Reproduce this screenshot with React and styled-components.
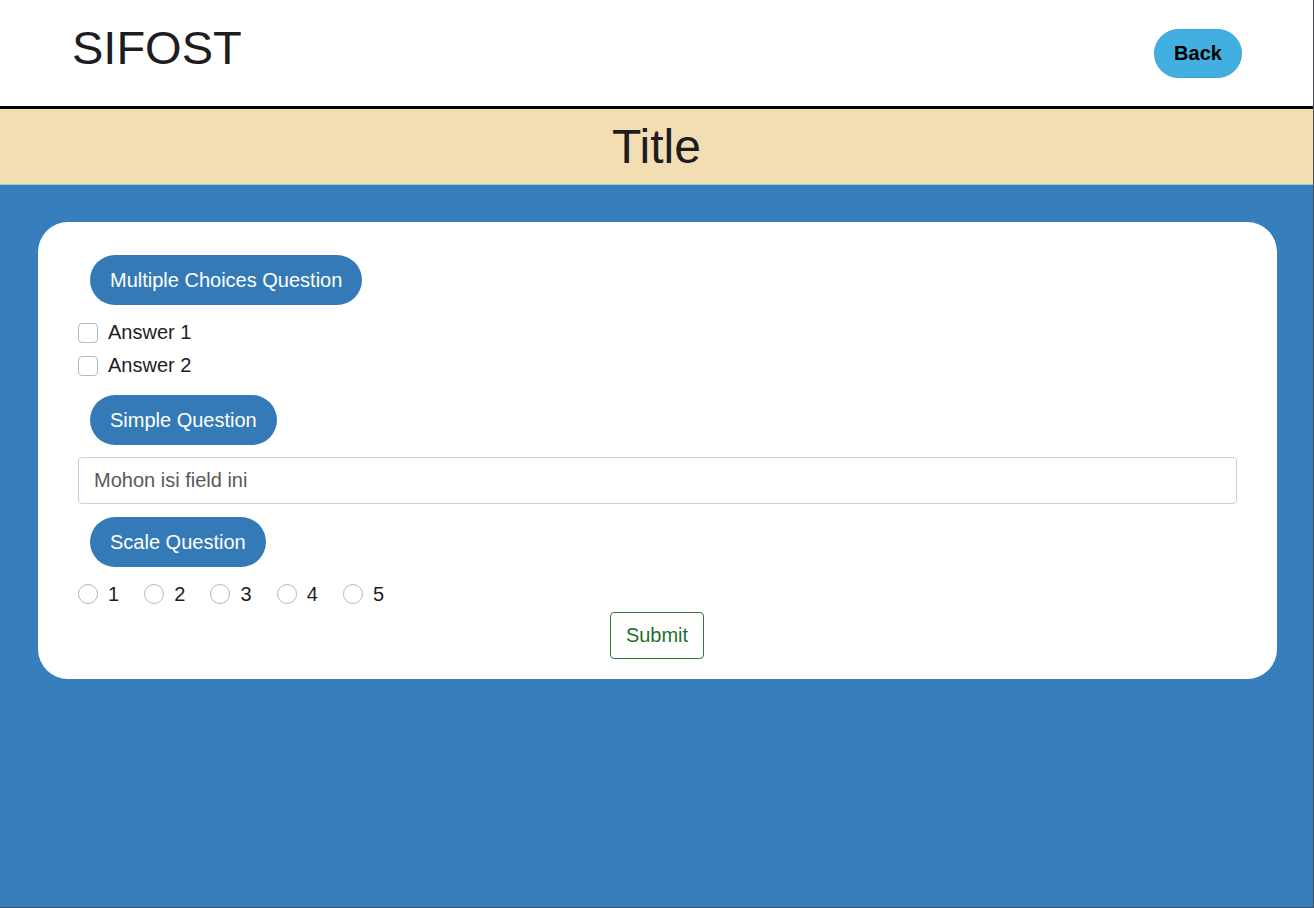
import React from "react"
import styled, { createGlobalStyle } from "styled-components"

const GlobalStyle = createGlobalStyle`
  * {
    box-sizing: border-box;
  }

  html,
  body {
    margin: 0;
    padding: 0;
  }

  body {
    font-family: "Liberation Sans", Arial, sans-serif;
    color: #212529;
  }
`

const Page = styled.div`
  min-height: 100vh;
  display: flex;
  flex-direction: column;
  background: #377fbc;
  border-right: 1px solid #4b4f55;
  border-bottom: 1px solid #4b4f55;
`

const Header = styled.header`
  height: 109px;
  padding: 0 71px 0 72px;
  display: flex;
  align-items: center;
  justify-content: space-between;
  background: #fff;
  border-bottom: 3px solid #000;
`

const Logo = styled.h1`
  margin: 0 0 10px;
  font-size: 47px;
  font-weight: 400;
  line-height: 1.15;
  color: #1d1d1f;
`

const BackButton = styled.button`
  width: 88px;
  height: 49px;
  border: 1px solid #3aa5d5;
  border-radius: 25px;
  background: #41b0e0;
  color: #000;
  font-family: inherit;
  font-size: 20px;
  font-weight: 700;
  cursor: pointer;
`

const TitleBand = styled.div`
  height: 76px;
  display: flex;
  align-items: center;
  justify-content: center;
  background: #f3deb3;
  border-bottom: 1px solid #8fd0e6;

  h2 {
    margin: 0;
    font-size: 48px;
    font-weight: 400;
    color: #1d1d1f;
  }
`

const Main = styled.main`
  flex: 1;
  padding: 37px 36px 40px 38px;
`

const Card = styled.form`
  display: flex;
  flex-direction: column;
  align-items: flex-start;
  padding: 33px 40px 20px;
  background: #fff;
  border-radius: 30px;
`

const QuestionPill = styled.div`
  height: 50px;
  margin: ${({ first }) => (first ? 0 : 13)}px 0 11px 12px;
  padding: 0 20px;
  display: flex;
  align-items: center;
  border-radius: 25px;
  background: #337ab7;
  color: #fff;
  font-size: 20px;
`

const OptionRow = styled.label`
  height: 33px;
  display: flex;
  align-items: center;
  gap: 10px;
  font-size: 20px;
  color: #1d1d1f;
`

const CheckBox = styled.input.attrs({ type: "checkbox" })`
  appearance: none;
  margin: 0;
  width: 20px;
  height: 20px;
  border: 1px solid #b8b8b8;
  border-radius: 4px;
  background: #fff;
`

const TextField = styled.input`
  width: 100%;
  height: 47px;
  margin-top: 1px;
  padding: 0 15px;
  border: 1px solid #cfcfcf;
  border-radius: 4px;
  font-family: inherit;
  font-size: 20px;
  color: #212529;

  &::placeholder {
    color: #595959;
  }
`

const ScaleRow = styled.div`
  height: 32px;
  display: flex;
  align-items: center;
  gap: 25.1px;
`

const ScaleOption = styled.label`
  display: flex;
  align-items: center;
  gap: 10px;
  font-size: 20px;
  color: #1d1d1f;
`

const Radio = styled.input.attrs({ type: "radio" })`
  appearance: none;
  margin: 0;
  width: 20px;
  height: 20px;
  border: 1px solid #b8b8b8;
  border-radius: 50%;
  background: #fff;
`

const SubmitButton = styled.button`
  align-self: center;
  width: 94px;
  height: 47px;
  margin: 2px 1px 0 0;
  border: 1px solid #2b7a3b;
  border-radius: 4px;
  background: #fff;
  color: #1f6f2c;
  font-family: inherit;
  font-size: 20px;
  cursor: pointer;
`

const App = () => {
  return (
    <>
      <GlobalStyle />
      <Page>
        <Header>
          <Logo>SIFOST</Logo>
          <BackButton type="button">Back</BackButton>
        </Header>
        <TitleBand>
          <h2>Title</h2>
        </TitleBand>
        <Main>
          <Card onSubmit={e => e.preventDefault()}>
            <QuestionPill first>Multiple Choices Question</QuestionPill>
            <OptionRow>
              <CheckBox />
              Answer 1
            </OptionRow>
            <OptionRow>
              <CheckBox />
              Answer 2
            </OptionRow>

            <QuestionPill>Simple Question</QuestionPill>
            <TextField type="text" placeholder="Mohon isi field ini" />

            <QuestionPill>Scale Question</QuestionPill>
            <ScaleRow>
              {[1, 2, 3, 4, 5].map(n => (
                <ScaleOption key={n}>
                  <Radio name="scale" value={n} />
                  {n}
                </ScaleOption>
              ))}
            </ScaleRow>

            <SubmitButton type="submit">Submit</SubmitButton>
          </Card>
        </Main>
      </Page>
    </>
  )
}

export default App
